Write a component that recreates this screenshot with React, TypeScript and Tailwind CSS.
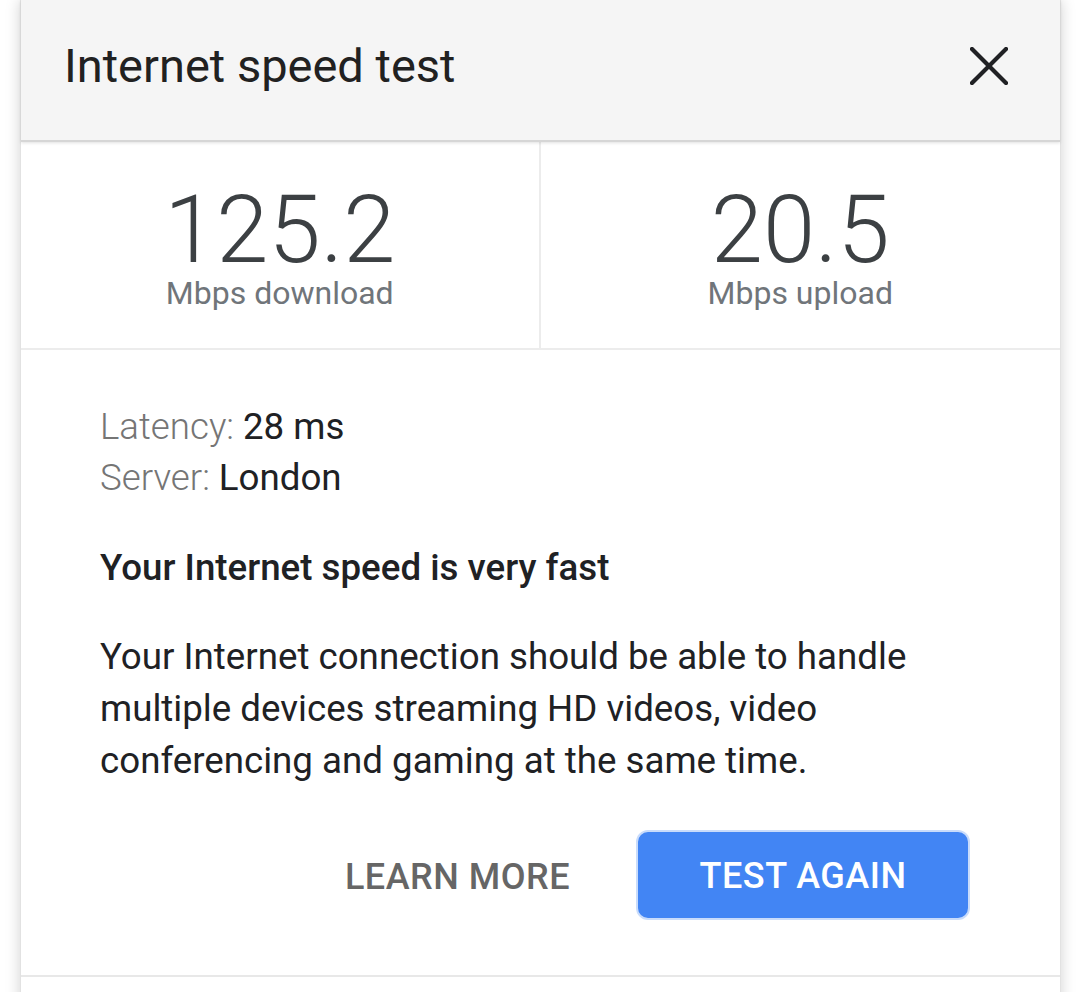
export default function App() {
  return (
    <div className="min-h-screen bg-white font-['Roboto',sans-serif]">
      <div className="ml-[20px] mr-[19px] bg-white shadow-[0_0_14px_rgba(0,0,0,0.18)] border-x border-[#e2e2e2]">
        {/* header */}
        <div className="relative z-10 flex h-[142px] items-center justify-between border-b-2 border-[#d6d6d6] bg-[#f5f5f5] pb-[9px] pl-[43px] pr-[51px] shadow-[0_1px_3px_rgba(0,0,0,0.12)]">
          <h1 className="text-[47px] leading-none text-[#212121]">Internet speed test</h1>
          <button className="flex h-[40px] w-[40px] items-center justify-center">
            <svg width="38" height="38" viewBox="0 0 38 38" fill="none">
              <path d="M2 2 L36 36 M36 2 L2 36" stroke="#202124" strokeWidth="4.2" strokeLinecap="square" />
            </svg>
          </button>
        </div>

        {/* stats */}
        <div className="grid grid-cols-2 border-b-2 border-[#ececec]">
          <Stat value="125.2" label="Mbps download" border />
          <Stat value="20.5" label="Mbps upload" />
        </div>

        {/* details */}
        <div className="border-b-2 border-[#e8e8e8] pb-[55px] pl-[79px] pr-[90px] pt-[51px]">
          <div className="text-[36.7px] leading-[51px]">
            <div>
              <span className="font-light text-[#757575]">Latency: </span>
              <span className="text-[#202124]">28 ms</span>
            </div>
            <div>
              <span className="font-light text-[#757575]">Server: </span>
              <span className="text-[#202124]">London</span>
            </div>
          </div>
          <h2 className="mt-[39px] text-[36.7px] font-medium leading-[51px] text-[#202124]">
            Your Internet speed is very fast
          </h2>
          <p className="mt-[38px] text-[36.7px] leading-[52px] text-[#202124]">
            Your Internet connection should be able to handle multiple devices streaming HD videos, video
            conferencing and gaming at the same time.
          </p>
          <div className="mt-[43px] flex items-center justify-end gap-[66px]">
            <button className="pt-[3px] text-[36px] font-medium tracking-[0.5px] text-[#666666]">LEARN MORE</button>
            <button className="flex h-[90px] w-[334px] items-center justify-center rounded-[12px] border-2 border-[#c9dcfb] bg-[#4285f4] pt-[2px] text-[36px] font-medium tracking-[0.5px] text-white">
              TEST AGAIN
            </button>
          </div>
        </div>
        <div className="h-[40px]" />
      </div>
    </div>
  );
}

function Stat({ value, label, border }: { value: string; label: string; border?: boolean }) {
  return (
    <div
      className={
        border
          ? 'flex flex-col items-center border-r-2 border-[#ececec] pb-[40px] pt-[42px]'
          : 'flex flex-col items-center pb-[40px] pt-[42px]'
      }
    >
      <div className="text-[94px] font-light leading-[92px] text-[#3c4043]">{value}</div>
      <div className="mt-[2px] text-[32px] leading-[30px] text-[#70757a]">{label}</div>
    </div>
  );
}
